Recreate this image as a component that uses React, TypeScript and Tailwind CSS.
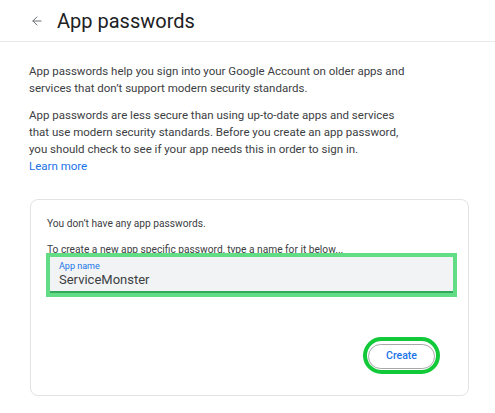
import React from 'react';
import { ArrowLeft } from 'lucide-react';

const App: React.FC = () => {
  return (
    <div className="min-h-[413px] w-[495px] bg-white" style={{ fontFamily: 'Roboto, "Liberation Sans", sans-serif' }}>
      {/* Header */}
      <div className="flex h-[42px] items-center border-b border-[#e8eaed] pl-[30px]">
        <ArrowLeft className="h-[14px] w-[14px] text-[#5f6368]" strokeWidth={1.6} />
        <h1 className="ml-[13px] mt-[1px] text-[20px] leading-none text-[#202124]">App passwords</h1>
      </div>

      {/* Intro */}
      <div className="px-[29px] pt-[21px] text-[11.5px] leading-[16.7px] text-[#3c4043]">
        <p>
          App passwords help you sign into your Google Account on older apps and
          <br />
          services that don’t support modern security standards.
        </p>
        <p className="mt-[11px]">
          App passwords are less secure than using up-to-date apps and services
          <br />
          that use modern security standards. Before you create an app password,
          <br />
          you should check to see if your app needs this in order to sign in.
        </p>
        <a className="block text-[#1a73e8]">Learn more</a>
      </div>

      {/* Card */}
      <div className="ml-[30px] mr-[26px] mt-[25px] flex flex-col rounded-[8px] border border-[#e3e3e3] pb-[21px] pl-[16px] pr-[11px] pt-[17px]">
        <p className="text-[10.2px] leading-[14px] text-[#3c4043]">You don’t have any app passwords.</p>
        <p className="mt-[13px] text-[10.2px] leading-[12px] text-[#3c4043]">
          To create a new app specific password, type a name for it below...
        </p>
        <div className="-mt-[3px] -ml-[1px] border-[4px] border-[#62dd86]">
          <div className="border-b-2 border-[#34a85a] bg-[#f1f3f4] px-[9px] pb-[3px] pt-[4px]">
            <div className="text-[9px] leading-[11px] text-[#1a73e8]">App name</div>
            <div className="text-[13px] leading-[16px] text-[#3c4043]">ServiceMonster</div>
          </div>
        </div>
        <div className="mt-[40px] flex justify-end pr-[17px]">
          <div className="rounded-full border-[4px] border-[#12c93a] p-[1px]">
            <button className="h-[25px] w-[67px] rounded-full border border-[#a8a8a8] bg-white text-[10.5px] font-medium text-[#1a73e8]">
              Create
            </button>
          </div>
        </div>
      </div>
    </div>
  );
};

export default App;
